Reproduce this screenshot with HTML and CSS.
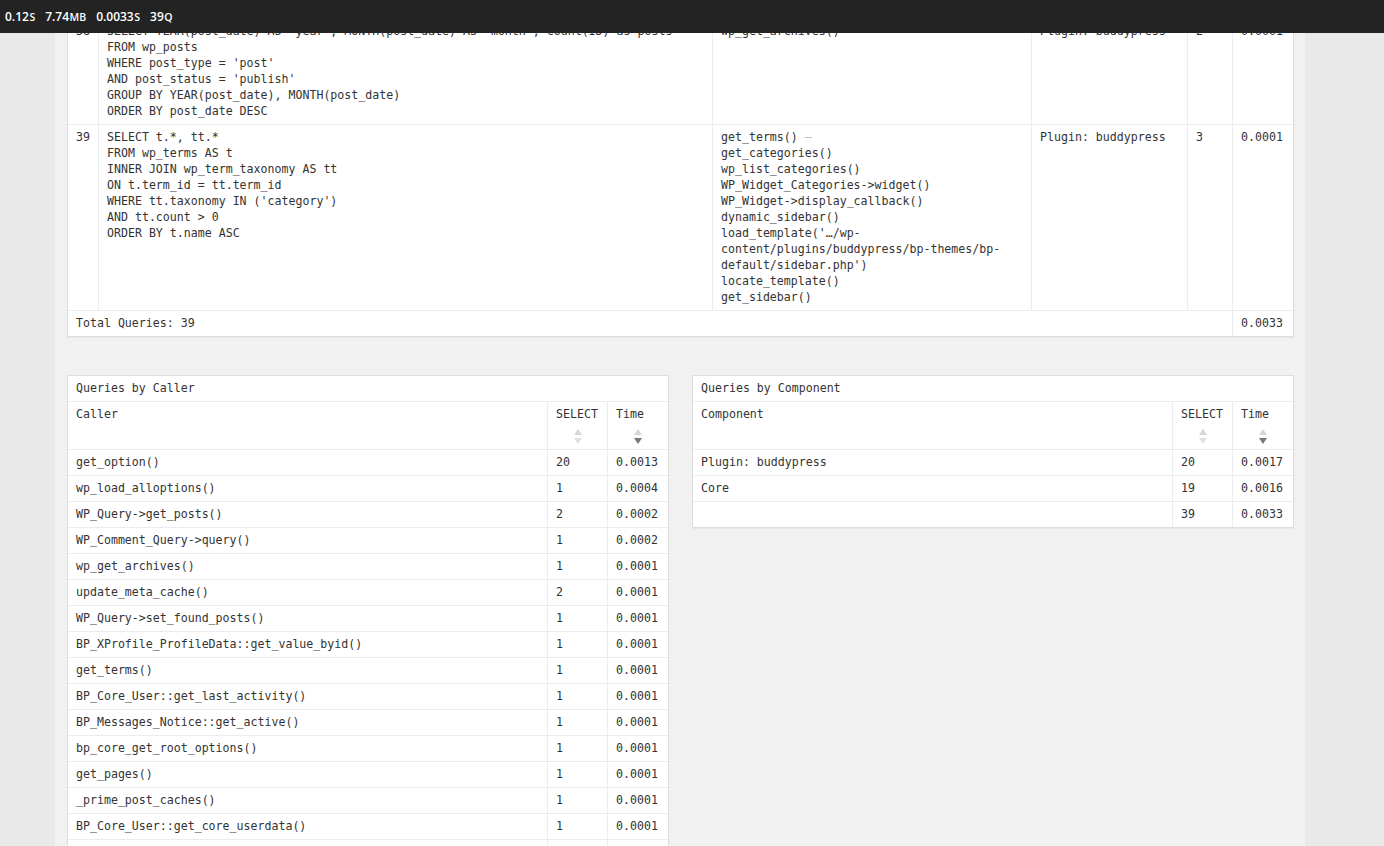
FILE: index.html
```html
<!DOCTYPE html>
<html lang="en">
<head>
<meta charset="utf-8">
<title>Query Monitor</title>
<link rel="stylesheet" href="styles.css">
</head>
<body>
<div class="adminbar">
  <span class="stat">0.12<span class="unit">s</span></span>
  <span class="stat">7.74<span class="unit">mb</span></span>
  <span class="stat">0.0033<span class="unit">s</span></span>
  <span class="stat">39<span class="unit">q</span></span>
</div>

<div class="panel">
  <table class="qm qm-main">
    <colgroup>
      <col class="c-row"><col class="c-sql"><col class="c-caller"><col class="c-comp"><col class="c-rows"><col class="c-time">
    </colgroup>
    <tbody>
      <tr>
        <td>38</td>
        <td>SELECT YEAR(post_date) AS `year`, MONTH(post_date) AS `month`, count(ID) as posts<br>FROM wp_posts<br>WHERE post_type = 'post'<br>AND post_status = 'publish'<br>GROUP BY YEAR(post_date), MONTH(post_date)<br>ORDER BY post_date DESC</td>
        <td>wp_get_archives() <span class="toggle">–</span></td>
        <td>Plugin: buddypress</td>
        <td>2</td>
        <td>0.0001</td>
      </tr>
      <tr>
        <td>39</td>
        <td>SELECT t.*, tt.*<br>FROM wp_terms AS t<br>INNER JOIN wp_term_taxonomy AS tt<br>ON t.term_id = tt.term_id<br>WHERE tt.taxonomy IN ('category')<br>AND tt.count &gt; 0<br>ORDER BY t.name ASC</td>
        <td>get_terms() <span class="toggle">–</span><br>get_categories()<br>wp_list_categories()<br>WP_Widget_Categories-&gt;widget()<br>WP_Widget-&gt;display_callback()<br>dynamic_sidebar()<br>load_template('…/wp-<br>content/plugins/buddypress/bp-themes/bp-<br>default/sidebar.php')<br>locate_template()<br>get_sidebar()</td>
        <td>Plugin: buddypress</td>
        <td>3</td>
        <td>0.0001</td>
      </tr>
    </tbody>
    <tfoot>
      <tr>
        <td colspan="5">Total Queries: 39</td>
        <td>0.0033</td>
      </tr>
    </tfoot>
  </table>

  <div class="split">
    <table class="qm qm-half">
      <colgroup><col class="c-name"><col class="c-num"><col class="c-t"></colgroup>
      <thead>
        <tr><th colspan="3" class="title">Queries by Caller</th></tr>
        <tr>
          <th>Caller</th>
          <th>SELECT<div class="sort"><i class="up"></i><i class="down"></i></div></th>
          <th>Time<div class="sort"><i class="up"></i><i class="down on"></i></div></th>
        </tr>
      </thead>
      <tbody>
        <tr><td>get_option()</td><td>20</td><td>0.0013</td></tr>
        <tr><td>wp_load_alloptions()</td><td>1</td><td>0.0004</td></tr>
        <tr><td>WP_Query-&gt;get_posts()</td><td>2</td><td>0.0002</td></tr>
        <tr><td>WP_Comment_Query-&gt;query()</td><td>1</td><td>0.0002</td></tr>
        <tr><td>wp_get_archives()</td><td>1</td><td>0.0001</td></tr>
        <tr><td>update_meta_cache()</td><td>2</td><td>0.0001</td></tr>
        <tr><td>WP_Query-&gt;set_found_posts()</td><td>1</td><td>0.0001</td></tr>
        <tr><td>BP_XProfile_ProfileData::get_value_byid()</td><td>1</td><td>0.0001</td></tr>
        <tr><td>get_terms()</td><td>1</td><td>0.0001</td></tr>
        <tr><td>BP_Core_User::get_last_activity()</td><td>1</td><td>0.0001</td></tr>
        <tr><td>BP_Messages_Notice::get_active()</td><td>1</td><td>0.0001</td></tr>
        <tr><td>bp_core_get_root_options()</td><td>1</td><td>0.0001</td></tr>
        <tr><td>get_pages()</td><td>1</td><td>0.0001</td></tr>
        <tr><td>_prime_post_caches()</td><td>1</td><td>0.0001</td></tr>
        <tr><td>BP_Core_User::get_core_userdata()</td><td>1</td><td>0.0001</td></tr>
        <tr class="below"><td>bp_get_option()</td><td>1</td><td>0.0001</td></tr>
      </tbody>
    </table>

    <table class="qm qm-half">
      <colgroup><col class="c-name"><col class="c-num"><col class="c-t"></colgroup>
      <thead>
        <tr><th colspan="3" class="title">Queries by Component</th></tr>
        <tr>
          <th>Component</th>
          <th>SELECT<div class="sort"><i class="up"></i><i class="down"></i></div></th>
          <th>Time<div class="sort"><i class="up"></i><i class="down on"></i></div></th>
        </tr>
      </thead>
      <tbody>
        <tr><td>Plugin: buddypress</td><td>20</td><td>0.0017</td></tr>
        <tr><td>Core</td><td>19</td><td>0.0016</td></tr>
        <tr><td></td><td>39</td><td>0.0033</td></tr>
      </tbody>
    </table>
  </div>
</div>
</body>
</html>
```

FILE: styles.css
```css
html, body {
  margin: 0;
  padding: 0;
  height: 846px;
  overflow: hidden;
  background: #e9e9e9;
}

.adminbar {
  position: fixed;
  top: 0;
  left: 0;
  right: 0;
  z-index: 10;
  height: 33px;
  background: #232323;
  display: flex;
  align-items: center;
  gap: 10px;
  padding: 0 5px;
  font-family: "Open Sans", "Liberation Sans", sans-serif;
  font-size: 12px;
  font-weight: 600;
  color: #fff;
}

.adminbar .unit {
  font-size: 10.5px;
  text-transform: uppercase;
  margin-left: 0.5px;
}

.panel {
  margin-left: 55px;
  width: 1226px;
  min-height: 846px;
  background: #f1f1f1;
  padding: 18px 12px 0 12px;
}

.qm {
  border-collapse: separate;
  border-spacing: 0;
  table-layout: fixed;
  background: #fff;
  border: 1px solid #dedede;
  box-shadow: 0 1px 1px rgba(0, 0, 0, 0.04);
  font-family: "DejaVu Sans Mono", "Liberation Mono", monospace;
  font-size: 11.6px;
  line-height: 16px;
  color: #333;
}

.qm td, .qm th {
  padding: 4px 8px 5px 8px;
  text-align: left;
  vertical-align: top;
  font-weight: normal;
  border-left: 1px solid #ececec;
  border-top: 1px solid #ececec;
  box-sizing: border-box;
  white-space: nowrap;
}

.qm tr > :first-child { border-left: none; }
.qm tbody tr:first-child td { border-top: none; }
.qm thead tr:first-child th { border-top: none; }
.qm thead + tbody tr:first-child td { border-top: 1px solid #ececec; }

.qm tr.below td { padding-top: 14px; }

.qm-main { width: 1227px; }
.qm-main .c-row { width: 30px; }
.qm-main .c-sql { width: 614px; }
.qm-main .c-caller { width: 319px; }
.qm-main .c-comp { width: 156px; }
.qm-main .c-rows { width: 45px; }
.qm-main .c-time { width: 61px; }

.toggle { color: #bbb; }

.split {
  display: flex;
  gap: 23px;
  align-items: flex-start;
  margin-top: 38px;
}

.qm-half { width: 602px; }
.qm-half .c-name { width: 479px; }
.qm-half .c-num { width: 60px; }
.qm-half .c-t { width: 61px; }

.sort {
  height: 22px;
  box-sizing: border-box;
  padding-top: 7px;
  display: flex;
  flex-direction: column;
  align-items: center;
  gap: 3px;
}

.sort i {
  display: block;
  width: 0;
  height: 0;
  border-left: 4px solid transparent;
  border-right: 4px solid transparent;
}

.sort .up { border-bottom: 6px solid #d6d6d6; }
.sort .down { border-top: 6px solid #e0e0e0; }
.sort .down.on { border-top-color: #777; }
```
